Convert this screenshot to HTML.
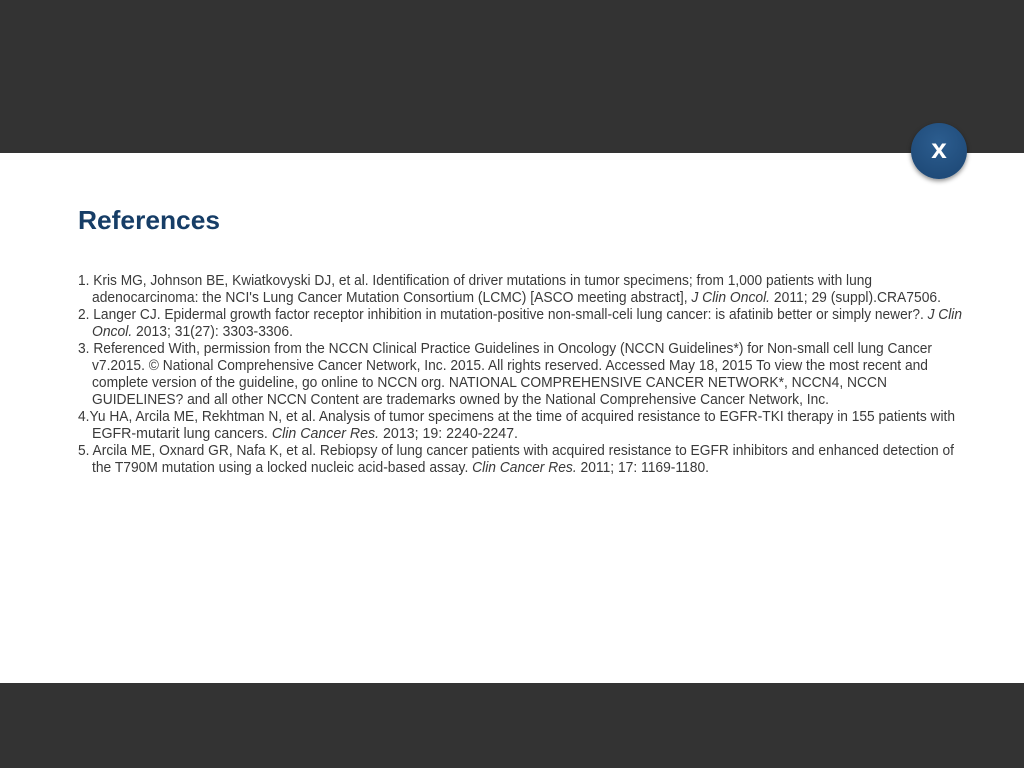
<!DOCTYPE html>
<html><head><style>
html,body{margin:0;padding:0;width:1024px;height:768px;overflow:hidden;background:#fff;font-family:"Liberation Sans",sans-serif}
.top{position:absolute;left:0;top:0;width:1024px;height:153px;background:#333}
.bot{position:absolute;left:0;top:683px;width:1024px;height:85px;background:#333}
.x{position:absolute;left:911px;top:123px;width:56px;height:56px;border-radius:50%;background:radial-gradient(circle at 50% 35%,#2c5d8f,#1b4572);box-shadow:0 2px 5px rgba(0,0,0,.45);color:#fff;font:bold 28px/52px "Liberation Sans",sans-serif;text-align:center}
svg{position:absolute;left:0;top:0}
</style></head><body>
<div class="top"></div><div class="bot"></div>
<div class="x">x</div>
<svg width="1024" height="768" font-family="Liberation Sans, sans-serif">
<text x="78" y="229" font-size="26" font-weight="bold" fill="#163d66" textLength="142" lengthAdjust="spacingAndGlyphs">References</text>
<g font-size="14.5" fill="#3a3a3a">
<text x="78" y="285" textLength="794" lengthAdjust="spacingAndGlyphs">1. Kris MG, Johnson BE, Kwiatkovyski DJ, et al. Identification of driver mutations in tumor specimens; from 1,000 patients with lung</text>
<text x="92" y="302" textLength="849" lengthAdjust="spacingAndGlyphs">adenocarcinoma: the NCI's Lung Cancer Mutation Consortium (LCMC) [ASCO meeting abstract], <tspan font-style="italic">J Clin Oncol.</tspan> 2011; 29 (suppl).CRA7506.</text>
<text x="78" y="319" textLength="884" lengthAdjust="spacingAndGlyphs">2. Langer CJ. Epidermal growth factor receptor inhibition in mutation-positive non-small-celi lung cancer: is afatinib better or simply newer?. <tspan font-style="italic">J Clin</tspan></text>
<text x="92" y="336" textLength="201" lengthAdjust="spacingAndGlyphs"><tspan font-style="italic">Oncol.</tspan> 2013; 31(27): 3303-3306.</text>
<text x="78" y="353" textLength="854" lengthAdjust="spacingAndGlyphs">3. Referenced With, permission from the NCCN Clinical Practice Guidelines in Oncology (NCCN Guidelines*) for Non-small cell lung Cancer</text>
<text x="92" y="370" textLength="836" lengthAdjust="spacingAndGlyphs">v7.2015. © National Comprehensive Cancer Network, Inc. 2015. All rights reserved. Accessed May 18, 2015 To view the most recent and</text>
<text x="92" y="387" textLength="795" lengthAdjust="spacingAndGlyphs">complete version of the guideline, go online to NCCN org. NATIONAL COMPREHENSIVE CANCER NETWORK*, NCCN4, NCCN</text>
<text x="92" y="404" textLength="737" lengthAdjust="spacingAndGlyphs">GUIDELINES? and all other NCCN Content are trademarks owned by the National Comprehensive Cancer Network, Inc.</text>
<text x="78" y="421" textLength="877" lengthAdjust="spacingAndGlyphs">4.Yu HA, Arcila ME, Rekhtman N, et al. Analysis of tumor specimens at the time of acquired resistance to EGFR-TKI therapy in 155 patients with</text>
<text x="92" y="438" textLength="426" lengthAdjust="spacingAndGlyphs">EGFR-mutarit lung cancers. <tspan font-style="italic">Clin Cancer Res.</tspan> 2013; 19: 2240-2247.</text>
<text x="78" y="455" textLength="876" lengthAdjust="spacingAndGlyphs">5. Arcila ME, Oxnard GR, Nafa K, et al. Rebiopsy of lung cancer patients with acquired resistance to EGFR inhibitors and enhanced detection of</text>
<text x="92" y="472" textLength="617" lengthAdjust="spacingAndGlyphs">the T790M mutation using a locked nucleic acid-based assay. <tspan font-style="italic">Clin Cancer Res.</tspan> 2011; 17: 1169-1180.</text>
</g>
</svg>
</body></html>
